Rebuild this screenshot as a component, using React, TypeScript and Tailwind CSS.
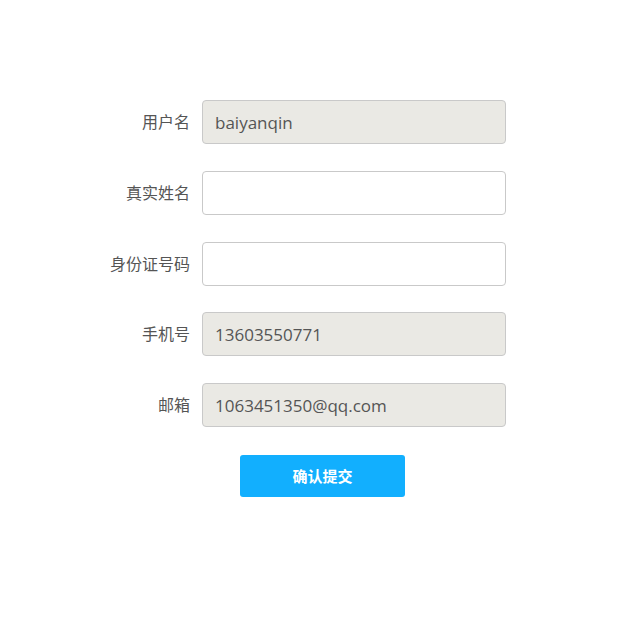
import React from 'react';

const fields = [
  { label: '用户名', value: 'baiyanqin', disabled: true },
  { label: '真实姓名', value: '', disabled: false },
  { label: '身份证号码', value: '', disabled: false },
  { label: '手机号', value: '13603550771', disabled: true },
  { label: '邮箱', value: '1063451350@qq.com', disabled: true },
];

export default function App() {
  return (
    <div
      className="min-h-[617px] w-[640px] bg-white pt-[100px] pl-[99px]"
      style={{ fontFamily: '"Open Sans", "Noto Sans CJK SC", sans-serif' }}
    >
      <form className="flex flex-col gap-[26.75px]">
        {fields.map((f) => (
          <div key={f.label} className="flex items-center">
            <label className="w-[91px] text-right text-[16px] text-[#555]">{f.label}</label>
            <input
              readOnly
              defaultValue={f.value}
              className={`ml-[12px] h-[44px] w-[304px] rounded-[4px] border border-[#c9c9c9] px-[12px] text-[17px] text-[#555] outline-none ${
                f.disabled ? 'bg-[#eae9e4]' : 'bg-white'
              }`}
            />
          </div>
        ))}
      </form>
      <button
        type="button"
        className="mt-[28px] ml-[141px] h-[42px] w-[165px] rounded-[3px] bg-[#12affe] text-[15px] font-bold text-white"
      >
        确认提交
      </button>
    </div>
  );
}
